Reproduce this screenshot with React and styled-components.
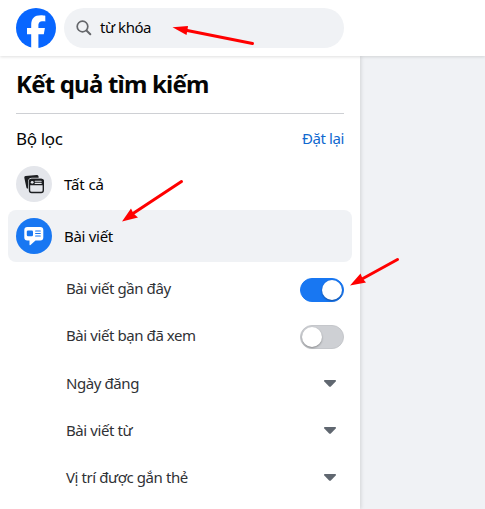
import React from "react";
import styled, { createGlobalStyle } from "styled-components";

const GlobalStyle = createGlobalStyle`
  * { box-sizing: border-box; }
  body {
    margin: 0;
    background: #f0f2f5;
    color: #050505;
    font-family: "Segoe UI", "Noto Sans", "Open Sans", sans-serif;
    overflow: hidden;
  }
`;

const Page = styled.div`
  position: relative;
  height: 509px;
  width: 485px;
  display: flex;
  flex-direction: column;
  overflow: hidden;
`;

const Header = styled.header`
  position: relative;
  z-index: 1;
  flex: none;
  height: 56px;
  display: flex;
  align-items: center;
  gap: 8px;
  padding: 0 16px;
  background: #fff;
  box-shadow: 0 1px 3px rgba(0, 0, 0, 0.13);
`;

const SearchBox = styled.div`
  width: 280px;
  height: 40px;
  border-radius: 20px;
  background: #f0f2f5;
  display: flex;
  align-items: center;
  padding: 0 0 1px 12px;
  gap: 8px;
`;

const Text = styled.span`
  font-size: ${(p) => p.$size || 15}px;
  font-weight: ${(p) => p.$weight || 400};
  letter-spacing: ${(p) => p.$track || 0}px;
  color: ${(p) => p.$color || "#050505"};
  line-height: 20px;
  white-space: nowrap;
`;

const SearchText = styled(Text)`
  padding-bottom: 1px;
`;

const Sidebar = styled.aside`
  width: 360px;
  flex: 1;
  background: #fff;
  box-shadow: 1px 0 4px rgba(0, 0, 0, 0.13);
`;

const Title = styled.h1`
  margin: 0 16px;
  height: 58px;
  padding-top: 12px;
  border-bottom: 1px solid #ced0d4;
  font-size: 24px;
  font-weight: 700;
  line-height: 32px;
  letter-spacing: -0.8px;
  white-space: nowrap;
  color: #050505;
`;

const FilterHeading = styled.div`
  height: 44px;
  padding: 15px 16px 0;
  display: flex;
  justify-content: space-between;
  align-items: flex-start;
`;

const ResetLink = styled(Text)`
  margin-top: -1px;
`;

const Category = styled.div`
  height: 52px;
  margin: 0 8px;
  padding: 0 8px;
  border-radius: 8px;
  display: flex;
  align-items: center;
  gap: 12px;
  background: ${(p) => (p.$active ? "#f0f2f5" : "transparent")};
`;

const IconDisc = styled.span`
  width: 36px;
  height: 36px;
  border-radius: 50%;
  display: grid;
  place-items: center;
  background: ${(p) => (p.$active ? "#1877f2" : "#e4e6eb")};
`;

const Options = styled.div`
  padding: 4px 16px 0 66px;
`;

const Option = styled.div`
  height: 47px;
  display: flex;
  align-items: center;
  justify-content: space-between;
`;

const OptionLabel = styled(Text)`
  padding-bottom: ${(p) => (p.$raised ? 3 : 1)}px;
`;

const Switch = styled.span`
  width: 44px;
  height: 24px;
  border-radius: 12px;
  padding: 1px;
  display: flex;
  justify-content: ${(p) => (p.$on ? "flex-end" : "flex-start")};
  background: ${(p) => (p.$on ? "#1877f2" : "#ced0d4")};
  border: 1px solid ${(p) => (p.$on ? "#1877f2" : "#c5c7cb")};
`;

const Knob = styled.span`
  width: 20px;
  height: 20px;
  border-radius: 50%;
  background: #fff;
  box-shadow: 0 1px 2px rgba(0, 0, 0, 0.35);
`;

const Caret = styled.svg`
  width: 12px;
  height: 7px;
  margin-right: 8px;
  display: block;
`;

const Annotations = styled.svg`
  position: absolute;
  inset: 0;
  z-index: 2;
  pointer-events: none;
`;

function Logo() {
  return (
    <svg width="40" height="40" viewBox="0 0 40 40">
      <circle cx="20" cy="20" r="20" fill="#0866ff" />
      <path
        d="M15.200 40V26.300H11V20h4.200v-2.700c0-6.800 3.100-10 9.800-10 1.300 0 3.400.2 4.300.5v5.600c-.5 0-1.300-.1-2.300-.1-3.300 0-4.600 1.200-4.600 4.500V20h6.500l-1.100 6.300h-5.400V40c-2.500.3-4.600.3-7.200 0z"
        fill="#fff"
      />
    </svg>
  );
}

function SearchIcon() {
  return (
    <svg width="16" height="16" viewBox="0 0 16 16" fill="none" stroke="#65676b" strokeLinecap="round">
      <circle cx="6.500" cy="6.500" r="5.300" strokeWidth="1.700" />
      <path d="M10.700 10.700L14.300 14.300" strokeWidth="2" />
    </svg>
  );
}

function CardsIcon() {
  return (
    <svg width="20" height="20" viewBox="0 0 20 20">
      <path d="M1.500 2.100L12.700.9q1.500-.1 1.800 1.300l.2 1.600H8q-3.900 0-3.900 3.900v7l-.7-.1q-.8-.1-1-1L.3 3.700Q.1 2.300 1.500 2.100z" fill="#1c1e21" />
      <rect x="5.500" y="5.500" width="13.800" height="13" rx="2.200" fill="none" stroke="#1c1e21" strokeWidth="1.400" />
      <path d="M4.900 11.300V7.300q0-2.500 2.500-2.500h10q2.500 0 2.500 2.500v4z" fill="#1c1e21" />
      <circle cx="8.200" cy="8.300" r="1.400" fill="#e4e6eb" />
      <path d="M11.200 7.300h6M11.200 9.400h6" stroke="#e4e6eb" strokeWidth="1.100" strokeLinecap="round" />
    </svg>
  );
}

function PostIcon() {
  return (
    <svg width="20" height="20" viewBox="0 0 20 20">
      <path
        d="M3.300 1h13q3 0 3 3v7.600q0 3-3 3h-4.800l-5 4.400q-1 .8-1-.4v-4H3.300q-3 0-3-3V4q0-3 3-3z"
        fill="#fff"
      />
      <rect x="2.800" y="4.500" width="6.200" height="5.800" rx="1.300" fill="#1877f2" />
      <path d="M11.600 5h4.700M11.600 7.500h4.700M11.600 10h4.700" stroke="#1877f2" strokeWidth="1.100" strokeLinecap="round" />
    </svg>
  );
}

const options = [
  { label: "Bài viết gần đây", on: true },
  { label: "Bài viết bạn đã xem", on: false },
  { label: "Ngày đăng" },
  { label: "Bài viết từ" },
  { label: "Vị trí được gắn thẻ" },
];

export default function App() {
  return (
    <Page>
      <GlobalStyle />
      <Header>
        <Logo />
        <SearchBox>
          <SearchIcon />
          <SearchText $track={-0.45}>từ khóa</SearchText>
        </SearchBox>
      </Header>
      <Sidebar>
        <Title>Kết quả tìm kiếm</Title>
        <FilterHeading>
          <Text $size={17} $weight={450} $track={-0.35}>Bộ lọc</Text>
          <ResetLink $color="#1068cf" $track={-0.4}>Đặt lại</ResetLink>
        </FilterHeading>
        <Category>
          <IconDisc><CardsIcon /></IconDisc>
          <Text $weight={450} $track={-0.1}>Tất cả</Text>
        </Category>
        <Category $active>
          <IconDisc $active><PostIcon /></IconDisc>
          <Text $weight={450} $track={-0.3}>Bài viết</Text>
        </Category>
        <Options>
          {options.map((o) => (
            <Option key={o.label}>
              <OptionLabel $color="#303236" $track={-0.42} $raised={o.on !== undefined}>{o.label}</OptionLabel>
              {o.on === undefined ? (
                <Caret viewBox="0 0 12 7">
                  <path d="M.6 0h10.800q.9.500.3 1.400L7.100 6.300q-1.100 1-2.200 0L.3 1.400Q-.3.500.6 0z" fill="#606770" />
                </Caret>
              ) : (
                <Switch $on={o.on}><Knob /></Switch>
              )}
            </Option>
          ))}
        </Options>
      </Sidebar>
      <Annotations width="485" height="509" viewBox="0 0 485 509">
        <g stroke="#f00" strokeWidth="3" strokeLinecap="round">
          <path d="M186 30.300L252.500 43.500" />
          <path d="M133 213.500L181.500 181.500" />
          <path d="M362 279L397.500 259.500" />
        </g>
        <g fill="#f00">
          <path d="M172.500 27.300L188 26l-.6 4.500-.9 4.500z" />
          <path d="M122 221.500L131 208.500l2.500 5 4.500 4z" />
          <path d="M350 285.500L360.500 273.500l2 5 3.500 4z" />
        </g>
      </Annotations>
    </Page>
  );
}
